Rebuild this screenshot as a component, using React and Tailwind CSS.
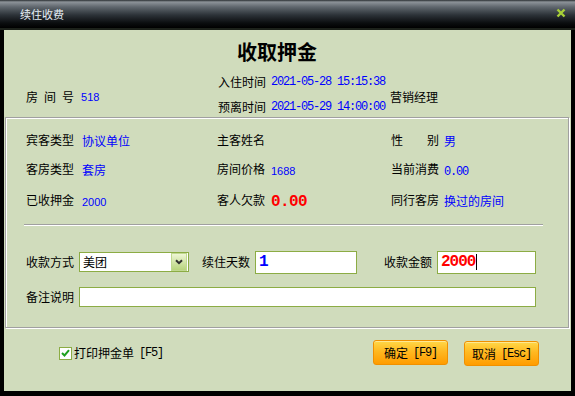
const cjk = "font-['Noto_Sans_CJK_SC',sans-serif]";
const mono = "font-['Liberation_Mono',monospace]";
const sans = "font-['Liberation_Sans',sans-serif]";

const Label = ({ children }) => (
  <span className={`${cjk} w-[48px] shrink-0 text-[12px] leading-[20px] text-black whitespace-nowrap`}>
    {children}
  </span>
);

const InfoCell = ({ label, gap, width, children }) => (
  <div className={`flex items-center h-[20px] ${width}`}>
    <Label>{label}</Label>
    <div className={gap}>{children}</div>
  </div>
);

const Blue = ({ children }) => (
  <span className={`${cjk} text-[12px] leading-[20px] text-[#0000ff]`}>{children}</span>
);

const Num = ({ children }) => (
  <span className={`${sans} text-[11px] leading-[20px] text-[#0000ff]`}>{children}</span>
);

const CloseIcon = () => (
  <svg width="10" height="10" viewBox="0 0 10 10">
    <path d="M1.5 1.5 L8.5 8.5 M8.5 1.5 L1.5 8.5" stroke="#a8d038" strokeWidth="2.4" />
  </svg>
);

const OrangeButton = ({ label, hotkey, extra }) => (
  <button
    className={`flex items-center justify-center w-[75px] h-[25px] rounded-[3px] border border-[#f09000] bg-[linear-gradient(to_bottom,#ffd848_0%,#ffb820_45%,#ff9c00_100%)] shadow-[inset_0_1px_0_#ffe890] ${extra}`}
  >
    <span className={`${cjk} text-[12px] leading-[16px] text-black`}>{label}</span>
    <span className={`${mono} ml-[5px] text-[12px] tracking-[-1.2px] leading-[16px] text-black`}>{hotkey}</span>
  </button>
);

export default function App() {
  return (
    <div className="w-[575px] h-[396px] bg-black flex flex-col overflow-hidden">
      {/* title bar */}
      <div className="h-[28px] flex items-center bg-[linear-gradient(to_bottom,#2a2e32_0px,#8d9399_2px,#5f666d_7px,#2c3238_15px,#0b0d0f_23px,#000_28px)]">
        <span className={`${cjk} ml-[20px] text-[11px] leading-[14px] text-[#e6eef6]`}>续住收费</span>
        <div className="ml-auto mr-[9px] mt-[-2px] flex">
          <CloseIcon />
        </div>
      </div>
      <div className="h-[2px] bg-[#1c211a]" />

      {/* body */}
      <div className="ml-[4px] w-[567px] h-[361px] bg-[#d0dcbc] flex flex-col">
        {/* header */}
        <div className="h-[87px]">
          <div className={`${cjk} pt-[10px] pl-[233px] text-[20px] font-bold leading-[24px] text-black`}>
            收取押金
          </div>
          <div className="flex mt-[8px] pl-[22px]">
            <div className="w-[192px] pt-[15px]">
              <div className="flex items-center h-[20px]">
                <span className={`${cjk} text-[12px] leading-[20px] tracking-[6px] text-black`}>房间号</span>
                <span className={`${sans} ml-[1px] text-[11px] leading-[20px] text-[#0000ff]`}>518</span>
              </div>
            </div>
            <div className="w-[172px] flex flex-col gap-[5px]">
              <div className="flex items-center h-[20px]">
                <Label>入住时间</Label>
                <span className={`${mono} ml-[5px] text-[12px] tracking-[-1.2px] leading-[20px] text-[#0000ff] whitespace-nowrap`}>
                  2021-05-28 15:15:38
                </span>
              </div>
              <div className="flex items-center h-[20px]">
                <Label>预离时间</Label>
                <span className={`${mono} ml-[5px] text-[12px] tracking-[-1.2px] leading-[20px] text-[#0000ff] whitespace-nowrap`}>
                  2021-05-29 14:00:00
                </span>
              </div>
            </div>
            <div className="pt-[15px]">
              <span className={`${cjk} block h-[20px] text-[12px] leading-[20px] text-black`}>营销经理</span>
            </div>
          </div>
        </div>

        {/* info panel */}
        <div className="ml-[1px] w-[564px] border border-[#a0a0a0] shadow-[inset_1px_1px_0_#ffffff,1px_1px_0_#ffffff] pt-[12px] pb-[20px]">
          <div className="flex pl-[20px]">
            <InfoCell label="宾客类型" gap="ml-[8px]" width="w-[191px]"><Blue>协议单位</Blue></InfoCell>
            <InfoCell label="主客姓名" gap="ml-[6px]" width="w-[174px]" />
            <InfoCell label="性　　别" gap="ml-[5px]" width=""><Blue>男</Blue></InfoCell>
          </div>
          <div className="flex pl-[20px] mt-[9px]">
            <InfoCell label="客房类型" gap="ml-[8px]" width="w-[191px]"><Blue>套房</Blue></InfoCell>
            <InfoCell label="房间价格" gap="ml-[6px]" width="w-[174px]"><Num>1688</Num></InfoCell>
            <InfoCell label="当前消费" gap="ml-[5px]" width="">
              <span className={`${mono} text-[12px] tracking-[-1.2px] leading-[20px] text-[#0000ff]`}>0.00</span>
            </InfoCell>
          </div>
          <div className="flex pl-[20px] mt-[11px]">
            <InfoCell label="已收押金" gap="ml-[8px]" width="w-[191px]"><Num>2000</Num></InfoCell>
            <InfoCell label="客人欠款" gap="ml-[6px]" width="w-[174px]">
              <span className={`${mono} text-[16px] font-bold tracking-[-0.6px] leading-[20px] text-[#ff0000]`}>0.00</span>
            </InfoCell>
            <InfoCell label="同行客房" gap="ml-[5px]" width=""><Blue>换过的房间</Blue></InfoCell>
          </div>

          <div className="ml-[18px] w-[519px] h-[1px] mt-[14px] bg-[#a0a0a0] shadow-[0_1px_0_#ffffff]" />

          {/* form row 1 */}
          <div className="flex items-center h-[24px] mt-[25px] pl-[20px]">
            <Label>收款方式</Label>
            <div className="ml-[5px] w-[110px] h-[20px] border border-[#8cac44] bg-white flex items-center">
              <span className={`${cjk} ml-[3px] text-[12px] leading-[18px] text-black`}>美团</span>
              <div className="ml-auto mr-[1px] w-[16px] h-[18px] border border-[#c0d890] bg-[linear-gradient(to_bottom,#eef6d4,#b8d47c)] flex items-center justify-center">
                <svg width="8" height="6" viewBox="0 0 8 6">
                  <path d="M1 1.2 L4 4.2 L7 1.2" fill="none" stroke="#303030" strokeWidth="2" />
                </svg>
              </div>
            </div>
            <span className={`${cjk} ml-[13px] w-[48px] text-[12px] leading-[20px] text-black`}>续住天数</span>
            <div className="ml-[5px] w-[102px] h-[23px] border border-[#8cac44] bg-white flex items-center">
              <span className={`${mono} ml-[3px] text-[16px] font-bold leading-[20px] text-[#0000ff]`}>1</span>
            </div>
            <span className={`${cjk} ml-[27px] w-[48px] text-[12px] leading-[20px] text-black`}>收款金额</span>
            <div className="ml-[5px] w-[99px] h-[23px] border border-[#8cac44] bg-white flex items-center">
              <span className={`${mono} ml-[3px] text-[16px] font-bold tracking-[-1px] leading-[20px] text-[#ff0000]`}>2000</span>
              <span className="ml-[1px] w-[1px] h-[16px] bg-black" />
            </div>
          </div>

          {/* form row 2 */}
          <div className="flex items-center h-[20px] mt-[13px] pl-[20px]">
            <Label>备注说明</Label>
            <div className="ml-[5px] w-[457px] h-[20px] border border-[#8cac44] bg-white" />
          </div>
        </div>

        {/* footer */}
        <div className="flex items-center h-[26px] mt-[12px]">
          <div className="ml-[55px] flex items-center">
            <div className="w-[13px] h-[13px] border border-[#8cac44] bg-white flex items-center justify-center">
              <svg width="9" height="8" viewBox="0 0 9 8">
                <path d="M1 4 L3.5 6.5 L8 1.2" fill="none" stroke="#1ea01e" strokeWidth="2" />
              </svg>
            </div>
            <span className={`${cjk} ml-[2px] text-[12px] leading-[20px] text-black`}>打印押金单</span>
            <span className={`${mono} ml-[5px] text-[12px] tracking-[-1.2px] leading-[20px] text-black`}>[F5]</span>
          </div>
          <div className="ml-auto mr-[32px] flex items-start gap-[16px]">
            <OrangeButton label="确定" hotkey="[F9]" extra="" />
            <OrangeButton label="取消" hotkey="[Esc]" extra="mt-[1px]" />
          </div>
        </div>
      </div>
    </div>
  );
}
